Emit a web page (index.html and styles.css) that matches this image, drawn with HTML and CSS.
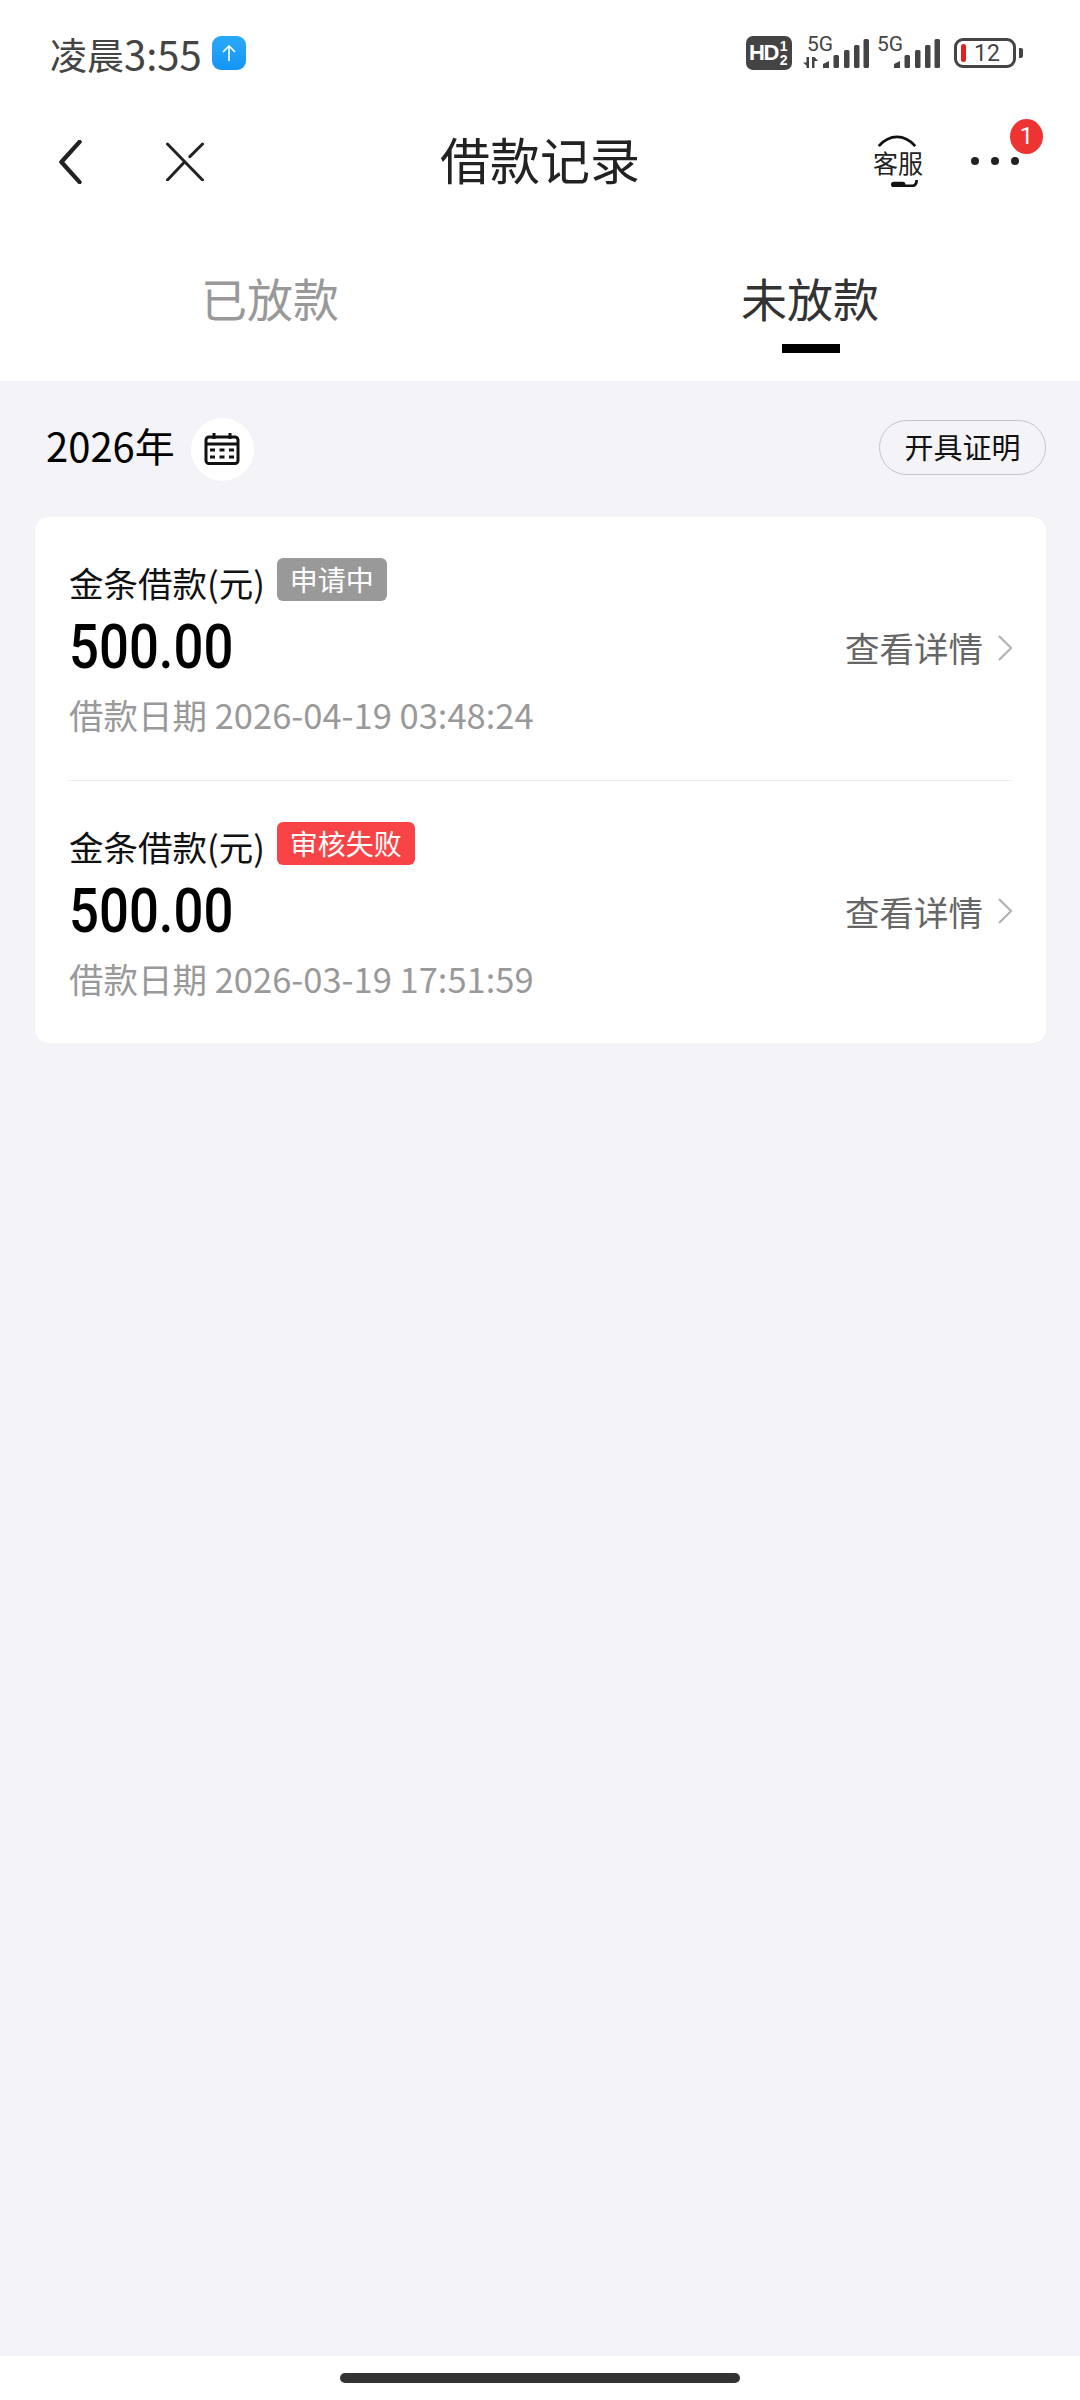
FILE: index.html
```html
<!DOCTYPE html>
<html lang="zh">
<head>
<meta charset="utf-8">
<title>借款记录</title>
<link rel="stylesheet" href="styles.css">
</head>
<body>
<div class="page">
  <header class="status">
    <div class="status-left">
      <span class="time"><span class="time-cn">凌晨</span>3:55</span>
      <span class="app-badge">
        <svg width="16" height="18" viewBox="0 0 16 18" fill="none" stroke="#fff" stroke-width="1.6"><path d="M8 17V2M2 8l6-6 6 6"/></svg>
      </span>
    </div>
    <div class="status-right">
      <span class="hd"><b class="hd-main">HD</b><span class="hd-frac"><b>1</b><b>2</b></span></span>
      <span class="net">
        <span class="net-label">5G</span>
        <svg class="updown" width="15" height="11" viewBox="0 0 15 11" fill="#444"><path d="M6 0v11H3.500V8.500L0 5.500h3.500V0zM9 0h2.500L15 4h-3.500v7H9z"/></svg>
        <svg width="46" height="30" viewBox="0 0 46 30" fill="#444"><path d="M0 29v-4l6-3v7z"/><rect x="10.500" y="16" width="5.500" height="13" rx="1.500"/><rect x="21" y="11" width="5.500" height="18" rx="1.500"/><rect x="31" y="6" width="5.500" height="23" rx="1.500"/><rect x="40.500" y="0" width="5.500" height="29" rx="1.500"/></svg>
      </span>
      <span class="net net-b">
        <span class="net-label">5G</span>
        <svg width="46" height="30" viewBox="0 0 46 30" fill="#444"><path d="M0 29v-4l6-3v7z"/><rect x="10.500" y="16" width="5.500" height="13" rx="1.500"/><rect x="21" y="11" width="5.500" height="18" rx="1.500"/><rect x="31" y="6" width="5.500" height="23" rx="1.500"/><rect x="40.500" y="0" width="5.500" height="29" rx="1.500"/></svg>
      </span>
      <span class="battery"><span class="battery-level"></span><span class="battery-num">12</span></span>
      <span class="battery-tip"></span>
    </div>
  </header>

  <nav class="nav">
    <div class="nav-left">
      <svg width="24" height="44" viewBox="0 0 24 46" fill="none" stroke="#222" stroke-width="4.500" stroke-linecap="round" stroke-linejoin="round"><path d="M22 2L3 23l19 21"/></svg>
      <svg class="close" width="40" height="39" viewBox="0 0 40 40" fill="none" stroke="#222" stroke-width="3" stroke-linecap="round"><path d="M2 2l36 37M38 2L25 15M18.500 21.500L2 39"/></svg>
    </div>
    <h1 class="title">借款记录</h1>
    <div class="nav-right">
      <span class="service">
        <svg class="service-top" width="42" height="13" viewBox="0 0 46 14" fill="none" stroke="#111" stroke-width="3"><path d="M3 12Q12 2 23 2t20 10"/></svg>
        <span class="service-text">客服</span>
        <svg class="service-bot" width="29" height="9" viewBox="0 0 30 10" fill="#111"><rect x="0" y="3" width="16" height="6" rx="3"/><path d="M14 6h10q3-1 3-5h3q0 8-6 8H14z"/></svg>
      </span>
      <span class="more"><i></i><i></i><i></i><span class="more-badge">1</span></span>
    </div>
  </nav>

  <div class="tabs">
    <div class="tab">已放款</div>
    <div class="tab tab-active">未放款</div>
  </div>

  <main class="content">
    <div class="filter">
      <div class="year-group">
        <span class="year">2026年</span>
        <span class="cal">
          <svg width="36" height="32" viewBox="0 0 36 32" fill="none"><rect x="2" y="4" width="32" height="26.500" rx="3" stroke="#111" stroke-width="3"/><path d="M2 11h32" stroke="#111" stroke-width="3"/><path d="M10 0v6M26 0v6" stroke="#111" stroke-width="3"/><path d="M6 17h5M15.500 17h5M25 17h5M6 24h5M15.500 24h5M25 24h5" stroke="#111" stroke-width="3"/></svg>
        </span>
      </div>
      <button class="cert">开具证明</button>
    </div>

    <section class="card">
      <article class="row">
        <div class="row-main">
          <div class="row-head"><span class="name">金条借款(元)</span><span class="tag tag-grey">申请中</span></div>
          <div class="amount">500.00</div>
          <div class="date">借款日期 2026-04-19 03:48:24</div>
        </div>
        <div class="detail"><span>查看详情</span><svg width="15" height="26" viewBox="0 0 16 28" fill="none" stroke="#b0b0b0" stroke-width="2.200"><path d="M1 1l13 13L1 27"/></svg></div>
      </article>
      <article class="row row-b">
        <div class="row-main">
          <div class="row-head"><span class="name">金条借款(元)</span><span class="tag tag-red">审核失败</span></div>
          <div class="amount">500.00</div>
          <div class="date">借款日期 2026-03-19 17:51:59</div>
        </div>
        <div class="detail"><span>查看详情</span><svg width="15" height="26" viewBox="0 0 16 28" fill="none" stroke="#b0b0b0" stroke-width="2.200"><path d="M1 1l13 13L1 27"/></svg></div>
      </article>
    </section>
  </main>

  <footer class="home"><span class="home-bar"></span></footer>
</div>
</body>
</html>
```
FILE: styles.css
```css
* { box-sizing: border-box; }
html, body { margin: 0; padding: 0; }
body {
  width: 1080px;
  height: 2400px;
  background: #fff;
  font-family: "Noto Sans CJK SC", "Noto Sans", sans-serif;
  overflow: hidden;
}
.page { display: flex; flex-direction: column; height: 2400px; }

.status { height: 106px; display: flex; justify-content: space-between; align-items: center; padding: 0 57px 0 50px; flex: none; }
.status-left { display: flex; align-items: center; gap: 10px; }
.time { font-size: 40px; line-height: 50px; color: #444; }
.time-cn { font-size: 37px; }
.app-badge { width: 34px; height: 34px; border-radius: 9px; background: linear-gradient(180deg, #2aa8f8, #1596f5); display: flex; align-items: center; justify-content: center; }

.status-right { display: flex; align-items: center; }
.hd { width: 46px; height: 34px; background: #444; border-radius: 7px; color: #fff; display: flex; align-items: center; padding-left: 3px; font-family: "Liberation Sans", sans-serif; flex: none; }
.hd-main { font-size: 22px; letter-spacing: -1.500px; line-height: 1; }
.hd-frac { display: flex; flex-direction: column; align-items: center; font-size: 14px; line-height: 14px; margin-left: 2px; }
.hd-frac b { display: block; }
.net { display: flex; align-items: flex-end; position: relative; height: 34px; width: 66px; margin-left: 11px; padding-bottom: 1px; justify-content: flex-end; flex: none; }
.net-b { width: 63px; margin-left: 8px; }
.net-label { position: absolute; left: 4px; top: -2px; font-family: "Roboto", sans-serif; font-size: 21px; line-height: 20px; color: #444; }
.net-b .net-label { left: 0; }
.updown { position: absolute; left: 0; bottom: 2px; }
.battery { width: 62px; height: 30px; border: 3px solid #444; border-radius: 9px; margin-left: 14px; display: flex; align-items: center; padding-left: 4px; flex: none; }
.battery-level { width: 5px; height: 18px; background: #e02020; border-radius: 3px; flex: none; }
.battery-num { font-family: "Roboto", sans-serif; font-size: 23px; line-height: 1; color: #444; margin-left: 8px; }
.battery-tip { width: 4px; height: 10px; background: #444; border-radius: 0 2px 2px 0; margin-left: 3px; flex: none; }

.nav { height: 108px; position: relative; display: flex; justify-content: space-between; align-items: center; padding: 0 0 0 58px; flex: none; }
.nav-left { display: flex; align-items: center; gap: 83px; margin-top: 3px; }
.title { position: absolute; left: 0; right: 0; top: 0; margin: 0; text-align: center; font-size: 50px; line-height: 104px; font-weight: 400; color: #222; pointer-events: none; }
.nav-right { display: flex; align-items: center; position: relative; z-index: 1; }
.service { width: 52px; height: 56px; position: relative; display: block; margin-right: 47px; }
.service-top { position: absolute; left: 4px; top: 3px; }
.service-text { position: absolute; left: 1px; top: 14px; font-size: 25px; line-height: 32px; color: #222; white-space: nowrap; }
.service-bot { position: absolute; left: 18px; top: 47px; }
.more { display: flex; gap: 12px; position: relative; margin: 2px 61px 0 0; align-items: center; }
.more i { width: 8px; height: 8px; border-radius: 50%; background: #222; display: block; }
.more-badge { position: absolute; left: 39px; top: -38px; width: 33px; height: 35px; border-radius: 50%; background: #ee3333; color: #fff; font-family: "Roboto", sans-serif; font-size: 24px; line-height: 35px; text-align: center; }

.tabs { height: 167px; display: flex; flex: none; }
.tab { position: relative; width: 50%; text-align: center; font-size: 46px; line-height: 60px; padding-top: 53px; color: #999; }
.tab-active { color: #333; }
.tab-active::after { content: ""; position: absolute; left: 242px; top: 130px; width: 58px; height: 9px; background: #000; }

.content { flex: 1; background: #f3f3f8; padding: 39px 34px 0 35px; display: flex; flex-direction: column; }
.filter { display: flex; justify-content: space-between; align-items: center; height: 55px; margin-bottom: 42px; }
.year-group { display: flex; align-items: center; padding-left: 11px; }
.year { font-size: 40px; line-height: 55px; color: #000; margin-bottom: 4px; }
.cal { width: 63px; height: 63px; border-radius: 50%; background: #fff; display: flex; align-items: center; justify-content: center; margin: 3px 0 0 16px; }
.cert { width: 167px; height: 55px; padding: 0 0 2px; border: 1px solid #c4c4cc; border-radius: 28px; background: transparent; font-family: inherit; font-size: 29px; line-height: 1; color: #111; }

.card { background: #fff; border-radius: 14px; padding: 0 35px 0 34px; }
.row { display: flex; justify-content: space-between; align-items: center; height: 263px; }
.row-b { border-top: 1px solid #eeeeee; height: 263px; }
.row-main { display: flex; flex-direction: column; align-self: flex-start; padding-top: 44px; }
.row-head { display: flex; align-items: flex-start; height: 44px; }
.name { font-size: 34.500px; line-height: 42px; color: #111; }
.tag { height: 43px; border-radius: 6px; color: #fff; font-size: 28px; line-height: 43px; padding: 0 13px; margin: -3px 0 0 12px; }
.tag-grey { background: #999; }
.tag-red { background: #f84446; }
.amount { font-family: "Roboto", sans-serif; font-weight: 500; font-size: 62px; line-height: 70px; color: #000; margin-top: 7px; transform: scaleX(0.85); transform-origin: left center; }
.date { font-size: 34.500px; line-height: 44px; color: #999; margin-top: 10px; white-space: nowrap; }
.detail { display: flex; align-items: center; gap: 15px; font-size: 34.500px; line-height: 43px; color: #666; margin: -2px -2px 0 0; }

.home { height: 44px; background: #fff; display: flex; justify-content: center; padding-top: 17px; flex: none; }
.home-bar { width: 400px; height: 10px; border-radius: 5px; background: #333; display: block; }
```
